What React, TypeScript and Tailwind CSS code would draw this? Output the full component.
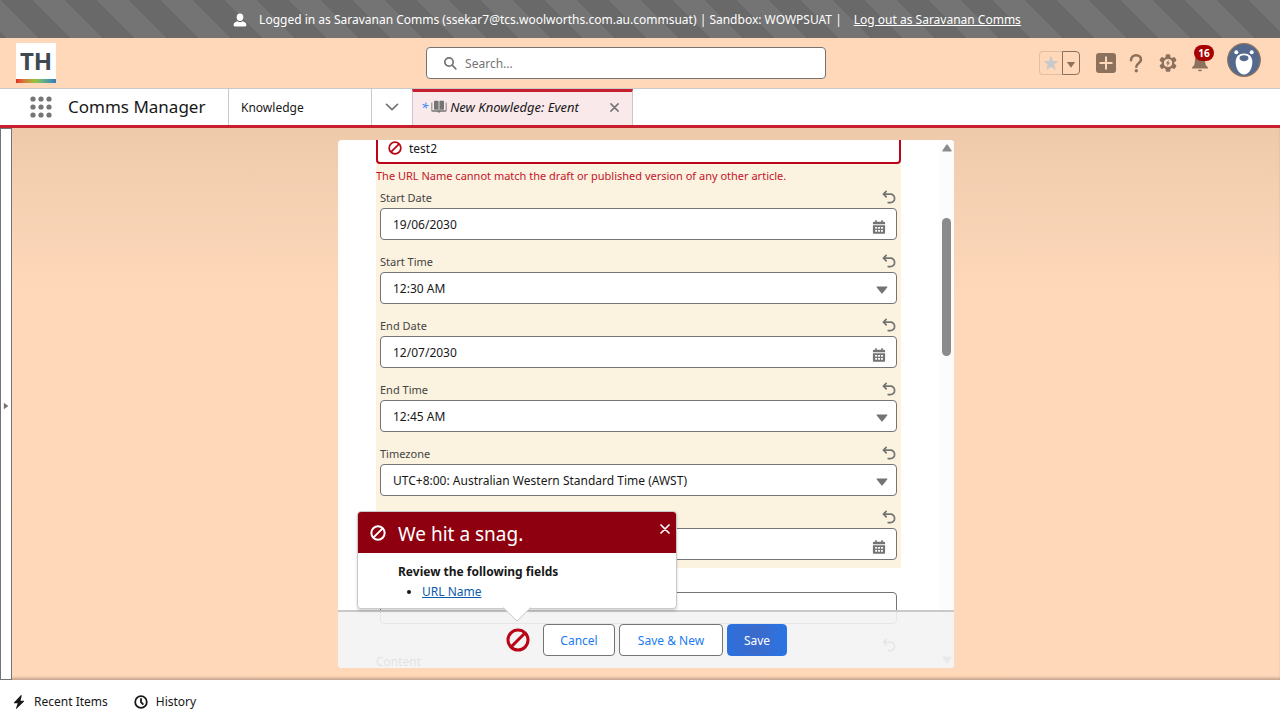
import React, { useId } from "react";

type IconProps = { className?: string };

const BanIcon = ({ className }: IconProps) => (
  <svg viewBox="0 0 24 24" className={className} fill="none" stroke="currentColor" strokeWidth="3" aria-hidden="true">
    <circle cx="12" cy="12" r="10" />
    <path d="M19 5 5 19" />
  </svg>
);

const UndoIcon = ({ className }: IconProps) => (
  <svg viewBox="0 0 14 14" className={className} fill="none" stroke="currentColor" strokeWidth="1.7" strokeLinecap="round" strokeLinejoin="round" aria-hidden="true">
    <path d="M4.200 1.400 1.400 4.200l2.800 2.700M1.600 4.200h6.800a4.100 4.100 0 0 1 4.200 4.200 4.100 4.100 0 0 1-4.200 4.200H6.200" />
  </svg>
);

const CalendarIcon = ({ className }: IconProps) => (
  <svg viewBox="0 0 14 14" className={className} fill="currentColor" aria-hidden="true">
    <path d="M3.200.3h1.600v1.500h4.400V.3h1.600v1.500h1.400c.5 0 .9.4.9.9v1.500H.9V2.700c0-.5.4-.9.9-.9h1.400z" />
    <path fillRule="evenodd" d="M.9 5.300h12.200v7.400c0 .6-.4 1-.9 1H1.800c-.5 0-.9-.4-.9-1zM3.200 7v1.800h1.900V7zM6.100 7v1.800h1.900V7zM9 7v1.800h1.900V7zM3.200 10v1.800h1.900V10zM6.100 10v1.800h1.900V10zM9 10v1.800h1.900V10z" />
  </svg>
);

const CloseIcon = ({ className }: IconProps) => (
  <svg viewBox="0 0 10 10" className={className} fill="none" stroke="currentColor" strokeWidth="1.7" strokeLinecap="round" aria-hidden="true">
    <path d="m1 1 8 8M9 1 1 9" />
  </svg>
);

const Waffle = () => (
  <svg viewBox="0 0 22 22" className="size-[22px]" fill="#747474" aria-hidden="true">
    {[3, 11, 19].map((y) => [3, 11, 19].map((x) => <circle key={`${x}-${y}`} cx={x} cy={y} r="2.6" />))}
  </svg>
);

const Gear = () => (
  <svg viewBox="-1 -1 22 22" className="size-5" aria-hidden="true">
    <g fill="#8c715d">
      {[0, 60, 120].map((a) => (
        <rect key={a} x="7.4" y="0.3" width="5.2" height="19.4" rx="1.4" transform={`rotate(${a} 10 10)`} />
      ))}
      <circle cx="10" cy="10" r="7" />
    </g>
    <circle cx="10" cy="10" r="4.5" fill="#ffd8ba" />
    <path d="M10.900 6.500 7.700 10.600h1.900l-.7 2.900 3.400-4.100h-2z" fill="#8c715d" />
  </svg>
);

const Avatar = () => (
  <svg viewBox="0 0 34 34" className="size-[34px]" aria-hidden="true">
    <circle cx="17" cy="17" r="16.3" fill="#54698d" stroke="#8c715d" strokeWidth="1.2" />
    <circle cx="9.300" cy="9.200" r="2" fill="#fff" />
    <circle cx="24.700" cy="9.200" r="2" fill="#fff" />
    <path d="M17 10.500c5 0 8 3 8.300 7.500.4 6.500-3 13.500-8.300 13.500S8.300 24.500 8.700 18c.3-4.500 3.300-7.500 8.300-7.500z" fill="#fff" />
    <path d="M17 12.300c3 0 4.500 1.100 4.500 2.700s-2 3.300-4.500 3.300-4.500-1.700-4.500-3.300 1.500-2.700 4.500-2.700z" fill="#54698d" />
  </svg>
);

const control =
  "h-8 w-full appearance-none rounded border border-[#747474] bg-white px-3 text-xs text-[#181818] outline-none";

type FieldProps = { label: string; value: string; type: "date" | "time"; labelless?: boolean };

function Field({ label, value, type, labelless }: FieldProps) {
  const id = useId();
  return (
    <div className="flex flex-col gap-0.5">
      <div className="flex h-4 items-start justify-between">
        {labelless ? (
          <span />
        ) : (
          <label htmlFor={id} className="text-[11px] leading-4 text-[#444444]">
            {label}
          </label>
        )}
        <button type="button" aria-label={`Undo ${label}`} className="pr-px text-[#747474]">
          <UndoIcon className="size-[14px]" />
        </button>
      </div>
      <div className="relative">
        {type === "date" ? (
          <>
            <input id={id} type="text" aria-label={label} defaultValue={value} className={control} />
            <button type="button" aria-label="Select a date" className="absolute top-3 right-[11px] text-[#747474]">
              <CalendarIcon className="size-[14px]" />
            </button>
          </>
        ) : (
          <>
            <select id={id} defaultValue={value} className={`${control} pt-0.5`}>
              <option>{value}</option>
            </select>
            <svg viewBox="0 0 12 8" className="pointer-events-none absolute top-[14px] right-[9px] h-2 w-3" fill="#747474" aria-hidden="true">
              <path d="M1.200.5h9.600c.6 0 .8.5.4.9L6.600 7.200c-.3.400-.9.400-1.200 0L.8 1.400C.4 1 .6.5 1.200.5z" />
            </svg>
          </>
        )}
      </div>
    </div>
  );
}

function Banner() {
  return (
    <div className="flex h-[38px] shrink-0 items-center justify-center bg-[linear-gradient(45deg,#696969_25%,#747474_25%,#747474_50%,#696969_50%,#696969_75%,#747474_75%)] bg-[length:64px_64px] pt-0.5 pr-[26px] text-xs text-white">
      <svg viewBox="0 0 14 14" className="mr-3 size-[14px]" fill="currentColor" aria-hidden="true">
        <ellipse cx="7" cy="4.200" rx="3.300" ry="3.700" />
        <path d="M.6 12c0-2.100 1.900-3.200 3.900-3.700.8.6 1.600.8 2.500.8s1.700-.2 2.500-.8c2 .5 3.900 1.600 3.900 3.700 0 .8-.5 1.400-1.300 1.400H1.900C1.100 13.400.6 12.800.6 12z" />
      </svg>
      <span className="mr-3">Logged in as Saravanan Comms (ssekar7@tcs.woolworths.com.au.commsuat) | Sandbox: WOWPSUAT |</span>
      <a href="#logout" className="underline">
        Log out as Saravanan Comms
      </a>
    </div>
  );
}

function Header() {
  return (
    <header className="grid h-[50px] shrink-0 grid-cols-[0.943fr_400px_1fr] items-center bg-[#ffd8ba] pr-[19px] pl-4">
      <div className="flex size-10 flex-col bg-white text-center">
        <span className="flex-1 text-2xl leading-9 font-bold text-[#3e4a52]">TH</span>
        <span className="h-1 bg-linear-to-r from-[#e8222f] via-[#8cc63f] to-[#2f7cc0]" />
      </div>
      <label className="flex h-8 items-center gap-2 rounded border border-[#747474] bg-white px-4">
        <svg viewBox="0 0 14 14" className="size-[14px]" fill="none" stroke="#747474" strokeWidth="1.700" strokeLinecap="round" aria-hidden="true">
          <circle cx="6" cy="6" r="4.200" />
          <path d="m9.200 9.200 3.600 3.600" />
        </svg>
        <input type="search" aria-label="Search" placeholder="Search..." className="min-w-0 flex-1 pt-0.5 text-xs outline-none placeholder:text-[#747474]" />
      </label>
      <div className="flex items-center justify-end">
        <div className="mr-4 flex">
          <button type="button" aria-label="Favorite" className="flex h-6 w-[23px] items-center justify-center rounded-l border border-r-0 border-[#e2bfa4]">
            <svg viewBox="0 0 16 16" className="size-4" fill="#c9c9c9" aria-hidden="true">
              <path d="m8 .5 2 5.400 5.600.2-4.400 3.500 1.500 5.500L8 12l-4.700 3.100 1.500-5.500L.4 6.100 6 5.900z" />
            </svg>
          </button>
          <button type="button" aria-label="Favorites list" className="flex h-6 w-[18px] items-center justify-center rounded-r border border-[#8c715d]">
            <svg viewBox="0 0 10 8" className="mt-1 h-2 w-[10px]" fill="#8c715d" aria-hidden="true">
              <path d="M.8 1h8.400L5 6.800z" />
            </svg>
          </button>
        </div>
        <button type="button" aria-label="Global actions" className="mr-3">
          <svg viewBox="0 0 20 20" className="size-5" aria-hidden="true">
            <rect width="20" height="20" rx="3" fill="#8c715d" />
            <path d="M10 3.500v13M3.500 10h13" stroke="#ffd8ba" strokeWidth="2" />
          </svg>
        </button>
        <button type="button" aria-label="Help" className="mr-3.5">
          <svg viewBox="0 0 16 20" className="h-5 w-4" fill="none" stroke="#8c715d" strokeWidth="2.600" aria-hidden="true">
            <path d="M3 7.200V7a5 5 0 0 1 5-4.800c3 0 5 1.900 5 4.300 0 3.800-4.700 3.700-4.700 7.300" strokeLinecap="round" />
            <circle cx="8.300" cy="17.800" r="1.700" fill="#8c715d" stroke="none" />
          </svg>
        </button>
        <button type="button" aria-label="Setup" className="mr-3">
          <Gear />
        </button>
        <button type="button" aria-label="16 notifications" className="relative mr-[17px]">
          <svg viewBox="-1 -1 22 22" className="size-5" fill="#8c715d" aria-hidden="true">
            <path d="M10 1.500c3.300 0 5.600 2.300 5.600 5.500 0 4.200.8 6.200 3 7.700.7.5.5 1.300-.3 1.300H1.700c-.8 0-1-.8-.3-1.300 2.200-1.500 3-3.500 3-7.700 0-3.200 2.300-5.500 5.600-5.500zM7.800 17.300h4.400c0 1-1 1.900-2.200 1.900s-2.200-.9-2.200-1.900z" />
          </svg>
          <span className="absolute -top-2 left-1 flex h-4 w-5 items-center justify-center rounded-full bg-[#a60000] pt-px text-[10px] font-bold text-white">
            16
          </span>
        </button>
        <button type="button" aria-label="Profile" className="mb-1.5">
          <Avatar />
        </button>
      </div>
    </header>
  );
}

function Nav() {
  return (
    <nav className="flex h-10 shrink-0 border-t border-b-3 border-t-[#c9c9c9] border-b-[#c6202f] bg-white text-xs text-[#181818]">
      <div className="flex w-[228px] items-center gap-4 pl-[30px]">
        <button type="button" aria-label="App launcher">
          <Waffle />
        </button>
        <span className="text-[17px]">Comms Manager</span>
      </div>
      <a href="#knowledge" className="flex w-36 items-center border-x border-[#c9c9c9] px-3 pt-0.5">
        Knowledge
      </a>
      <button type="button" aria-label="Show navigation menu" className="flex w-10 items-center justify-center">
        <svg viewBox="0 0 14 8" className="h-2 w-[14px]" fill="none" stroke="#747474" strokeWidth="1.700" strokeLinecap="round" aria-hidden="true">
          <path d="m1.500 1.300 5.500 5.200 5.500-5.200" />
        </svg>
      </button>
      <div className="flex w-[221px] items-center border-x border-t-3 border-x-[#c9c9c9] border-t-[#c6202f] bg-[#f9e9eb] pr-[13px] pb-0.5 pl-2">
        <a href="#event" className="flex flex-1 items-center gap-[3px] text-[13px] italic">
          <span className="text-[#2e84ff]">*</span>
          <svg viewBox="0 0 16 14" className="h-[14px] w-4" fill="#747474" aria-hidden="true">
            <path d="M4 .8h2.400c.7 0 1.200.3 1.200 1v8.400c-.4-.4-.9-.5-1.400-.5H4c-.6 0-1-.4-1-1V1.800c0-.6.4-1 1-1zM9.600.8H12c.6 0 1 .4 1 1v6.900c0 .6-.4 1-1 1H9.800c-.5 0-1 .1-1.400.5V1.800c0-.7.5-1 1.200-1z" />
            <path d="M1.300 2.300c-.6.100-.9.500-.9 1v7.200c0 .8.500 1.200 1.200 1.200h4.900c.4 1.200 2.600 1.200 3 0h4.900c.7 0 1.200-.4 1.200-1.200V3.300c0-.5-.3-.9-.9-1v8H1.300z" />
          </svg>
          New Knowledge: Event
        </a>
        <button type="button" aria-label="Close tab" className="text-[#747474]">
          <CloseIcon className="size-[9px]" />
        </button>
      </div>
    </nav>
  );
}

function SnagPopover() {
  return (
    <section
      role="dialog"
      aria-label="We hit a snag."
      className="absolute bottom-full left-1/2 mb-[19px] -ml-px w-80 -translate-x-1/2 rounded border border-[#c9c9c9] bg-white text-xs text-[#181818] shadow-[0_2px_3px_0_rgba(0,0,0,0.16)]"
    >
      <header className="flex h-[41px] items-center rounded-t-[3px] bg-[#8e000f] pr-1.5 pl-3 text-white">
        <BanIcon className="mr-3 size-4" />
        <h2 className="flex-1 pt-0.5 text-[19px] leading-6">We hit a snag.</h2>
        <button type="button" aria-label="Close" className="mb-2">
          <CloseIcon className="size-[10px]" />
        </button>
      </header>
      <div className="px-10 pt-[9px] pb-1.5 leading-5">
        <strong className="font-bold">Review the following fields</strong>
        <ul className="list-disc pl-6">
          <li>
            <a href="#url-name" className="text-[#0b5cab] underline">
              URL Name
            </a>
          </li>
        </ul>
      </div>
      <svg viewBox="0 0 28 15" className="absolute top-full left-1/2 -mt-px h-[15px] w-7 -translate-x-1/2" aria-hidden="true">
        <path d="M0 0h28L14 14z" fill="#fff" />
        <path d="m0 .5 14 13.500L28 .5" fill="none" stroke="#c9c9c9" />
      </svg>
    </section>
  );
}

function EventModal() {
  return (
    <div role="dialog" aria-label="New Knowledge: Event" className="relative mx-auto flex h-full w-full max-w-[616px] overflow-hidden rounded bg-white">
      <form className="min-w-0 flex-1 px-[38px]">
        <div className="-mt-2 bg-[#fbf2df] pb-2">
          <div className="flex h-8 items-center gap-[7px] rounded border-2 border-[#ba0517] bg-white px-[10px]">
            <BanIcon className="size-[14px] text-[#ba0517]" />
            <input id="url-name" aria-label="URL Name" defaultValue="test2" className="min-w-0 flex-1 pt-0.5 text-xs text-[#181818] outline-none" />
          </div>
          <p className="pt-1 pb-1.5 text-[11px] leading-4 text-[#c3142c]">
            The URL Name cannot match the draft or published version of any other article.
          </p>
          <div className="flex flex-col gap-3.5 px-1">
            <Field label="Start Date" value="19/06/2030" type="date" />
            <Field label="Start Time" value="12:30 AM" type="time" />
            <Field label="End Date" value="12/07/2030" type="date" />
            <Field label="End Time" value="12:45 AM" type="time" />
            <Field label="Timezone" value="UTC+8:00: Australian Western Standard Time (AWST)" type="time" />
            <Field label="Date" value="" type="date" labelless />
          </div>
        </div>
        <div className="px-1 pt-6">
          <input aria-label="Text" className={control} />
          <div className="mt-3.5 flex h-4 justify-end pr-px text-[#747474]">
            <UndoIcon className="size-[14px]" />
          </div>
        </div>
        <p className="text-xs leading-4 text-[#444444]">Content</p>
      </form>
      <div className="flex w-[15px] shrink-0 flex-col items-center bg-[#fcfcfc] pt-1 pb-1" aria-hidden="true">
        <svg viewBox="0 0 10 8" className="h-2 w-[10px]" fill="#8b8b8b">
          <path d="M4.300.8.4 6.400c-.3.600 0 1.100.600 1.100h8c.600 0 .9-.5.6-1.100L5.700.8c-.4-.5-1-.5-1.400 0z" />
        </svg>
        <div className="mt-[66px] h-[138px] w-[9px] rounded-full bg-[#8b8b8b]" />
        <svg viewBox="0 0 10 8" className="mt-auto h-2 w-[10px] rotate-180" fill="#8b8b8b">
          <path d="M4.300.8.4 6.400c-.3.600 0 1.100.600 1.100h8c.600 0 .9-.5.6-1.100L5.700.8c-.4-.5-1-.5-1.400 0z" />
        </svg>
      </div>
      <footer className="absolute inset-x-0 bottom-0 flex h-[58px] items-center justify-center gap-1 border-t-2 border-[#c9c9c9] bg-[#f3f3f3]/90 pl-px text-xs text-[#1b7bf2]">
        <div className="relative mr-[9px]">
          <button type="button" aria-label="Show errors" className="block text-[#ba0517]">
            <BanIcon className="size-6" />
          </button>
          <SnagPopover />
        </div>
        <button type="button" className="h-8 w-[72px] rounded border border-[#747474] bg-white pt-0.5">
          Cancel
        </button>
        <button type="button" className="h-8 w-[104px] rounded border border-[#747474] bg-white pt-0.5">
          Save &amp; New
        </button>
        <button type="button" className="h-8 w-[60px] rounded border border-[#2b73e3] bg-linear-to-r from-[#2f6fdc] via-[#3a6bcb] to-[#2b73e3] pt-0.5 text-white">
          Save
        </button>
      </footer>
    </div>
  );
}

export default function App() {
  return (
    <div className="flex h-screen flex-col bg-white font-['Noto_Sans','Open_Sans',sans-serif] text-xs">
      <Banner />
      <Header />
      <Nav />
      <main className="flex min-h-0 flex-1 bg-[#ffd8ba] bg-linear-to-b from-[#eecaab] from-0% to-[#ffd8ba] to-30% shadow-[inset_0_-3px_3px_-1px_rgba(0,0,0,0.25)]">
        <button type="button" aria-label="Expand side panel" className="flex w-3 shrink-0 items-center justify-center border border-[#747474] bg-white pt-1">
          <svg viewBox="0 0 6 8" className="h-2 w-[6px]" fill="#747474" aria-hidden="true">
            <path d="M.8.8 5.400 4 .8 7.200z" />
          </svg>
        </button>
        <div className="min-w-0 flex-1 py-3">
          <EventModal />
        </div>
      </main>
      <footer className="flex h-10 shrink-0 items-center gap-[26px] bg-white px-3 pt-[3px] text-[#181818]">
        <button type="button" className="flex items-center gap-2">
          <svg viewBox="0 0 14 14" className="size-[14px]" fill="currentColor" aria-hidden="true">
            <path d="M8.800.3 2 7.600c-.3.300-.1.700.3.700h3.400L4 13.200c-.2.500.4.800.8.400L12 6.400c.3-.3.1-.7-.3-.7H8.500L9.700.8C9.800.2 9.200-.1 8.800.3z" />
          </svg>
          Recent Items
        </button>
        <button type="button" className="flex items-center gap-2">
          <svg viewBox="0 0 14 14" className="size-[14px]" fill="none" stroke="currentColor" strokeWidth="1.800" strokeLinecap="round" aria-hidden="true">
            <circle cx="7" cy="7" r="5.800" />
            <path d="M7 4v3.200l1.800 1.800" />
          </svg>
          History
        </button>
      </footer>
    </div>
  );
}
